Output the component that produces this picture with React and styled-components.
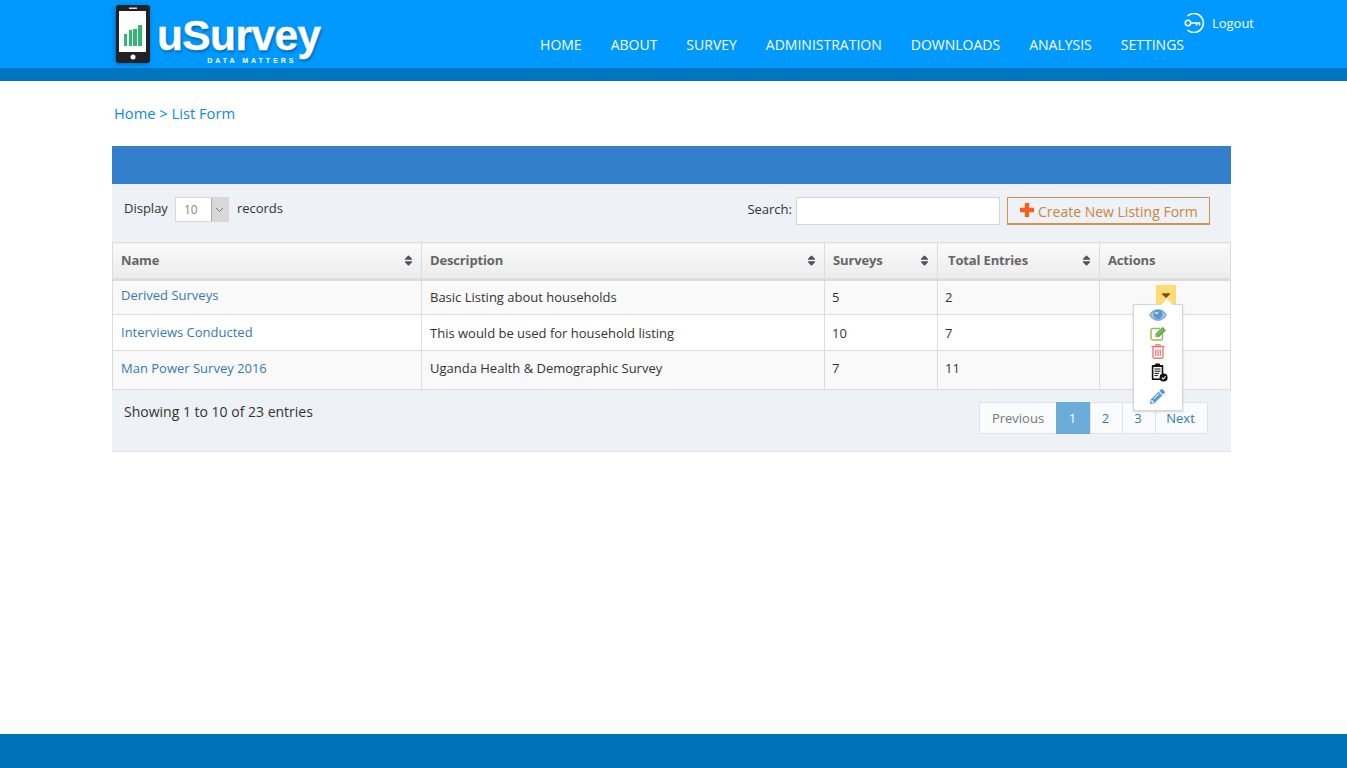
import React from "react";
import styled, { createGlobalStyle } from "styled-components";
import { FaPencilAlt, FaSort, FaCaretDown } from "react-icons/fa";

const GlobalStyle = createGlobalStyle`
    html, body { margin: 0; padding: 0; background: #fff; }
    body { font-family: "Open Sans", "Liberation Sans", sans-serif; color: #333; font-size: 13px; }
`;

const NAV_ITEMS = ["HOME", "ABOUT", "SURVEY", "ADMINISTRATION", "DOWNLOADS", "ANALYSIS", "SETTINGS"];

const COLUMNS = [
    { name: "Name", width: 309, sort: true },
    { name: "Description", width: 403, sort: true },
    { name: "Surveys", width: 113, sort: true },
    { name: "Total Entries", width: 162, sort: true, indent: true },
    { name: "Actions", width: 131 },
];

const ROWS = [
    { name: "Derived Surveys", description: "Basic Listing about households", surveys: 5, entries: 2, height: 35, striped: true, lift: 2, nameTop: -2 },
    { name: "Interviews Conducted", description: "This would be used for household listing", surveys: 10, entries: 7, height: 36, lift: 0, nameTop: -1 },
    { name: "Man Power Survey 2016", description: "Uganda Health & Demographic Survey", surveys: 7, entries: 11, height: 39, striped: true, lift: 4, nameTop: 0 },
];

const Logo = () => (
    <LogoWrap>
        <PhoneIcon width="34" height="58" viewBox="0 0 34 58">
            <rect x="0" y="0" width="34" height="58" rx="3" fill="#222226" />
            <rect x="3" y="6" width="27" height="41" fill="#fff" />
            <rect x="13" y="2.5" width="8" height="1.5" fill="#ddd" />
            <circle cx="17" cy="52" r="2.5" fill="#fff" />
            <rect x="8" y="29" width="3" height="12" fill="#2eb872" />
            <rect x="13" y="25" width="3" height="16" fill="#2eb872" />
            <rect x="17" y="24" width="4" height="17" fill="#2eb872" />
            <rect x="22" y="20" width="4" height="21" fill="#2eb872" />
        </PhoneIcon>
        <LogoText>
            uSurvey
            <LogoTag>DATA MATTERS</LogoTag>
        </LogoText>
    </LogoWrap>
);

const KeyIcon = () => (
    <svg width="21" height="20" viewBox="0 0 21 20" fill="none" stroke="#fff" strokeWidth="1.6">
        <path d="M3.5 3 A9.5 9.5 0 1 1 3.5 17" />
        <circle cx="4" cy="10" r="2.7" />
        <path d="M6.7 10 H15.5 V12.5 M12.5 10 V12.5" />
    </svg>
);

const PlusIcon = () => (
    <svg width="14" height="14" viewBox="0 0 14 14">
        <path d="M4.8 0 H9.2 V4.8 H14 V9.2 H9.2 V14 H4.8 V9.2 H0 V4.8 H4.8 Z" fill="#f4611d" />
    </svg>
);

const EyeIcon = () => (
    <svg width="18" height="12" viewBox="0 0 18 12">
        <path d="M0.8 6 C3 2.4 6 0.8 9 0.8 C12 0.8 15 2.4 17.2 6 C15 9.6 12 11.2 9 11.2 C6 11.2 3 9.6 0.8 6 Z" fill="#a9c6e6" stroke="#6ea5d8" strokeWidth="1.2" />
        <circle cx="9" cy="5.6" r="4.6" fill="#5b97d2" />
        <ellipse cx="7.6" cy="4" rx="1.8" ry="1.1" fill="#dbe8f5" />
    </svg>
);

const EditIcon = () => (
    <svg width="18" height="15" viewBox="0 0 18 15">
        <path d="M12.5 6.5 V12 A2 2 0 0 1 10.5 14 H3 A2 2 0 0 1 1 12 V4.5 A2 2 0 0 1 3 2.5 H10" fill="none" stroke="#8fbf5f" strokeWidth="1.4" />
        <path d="M1 5 V12 A2 2 0 0 0 3 14 H6" fill="none" stroke="#e9b65c" strokeWidth="0.9" />
        <path d="M5 10.8 L5.8 7.6 L12.6 0.8 L16 4.2 L9.2 11 Z" fill="#6cae45" />
        <path d="M6 10 L13 3" stroke="#a6d184" strokeWidth="0.8" />
    </svg>
);

const TrashIcon = () => (
    <svg width="14" height="15" viewBox="0 0 14 15" fill="none">
        <path d="M5 2 V0.8 H9 V2" stroke="#e8705f" strokeWidth="1.1" />
        <path d="M0.5 2.6 H13.5" stroke="#e8705f" strokeWidth="1.6" />
        <path d="M2 3.4 V12.8 A1.5 1.5 0 0 0 3.5 14.3 H10.5 A1.5 1.5 0 0 0 12 12.8 V3.4" stroke="#ec8063" strokeWidth="1.4" />
        <path d="M4.8 5.5 V12 M7 5.5 V12 M9.2 5.5 V12" stroke="#d9608f" strokeWidth="1.1" />
    </svg>
);

const ClipboardIcon = () => (
    <svg width="17" height="19" viewBox="0 0 17 19">
        <rect x="0.8" y="2" width="11.5" height="15" rx="1" fill="#111" />
        <rect x="2.4" y="4" width="8.3" height="11.4" fill="#fff" />
        <rect x="4" y="0.6" width="5" height="3.4" rx="0.6" fill="#111" />
        <path d="M3.5 6 H9.5 M3.5 8.2 H9.5 M3.5 10.4 H8 M3.5 12.6 H7" stroke="#111" strokeWidth="1" />
        <circle cx="12.6" cy="14.6" r="4" fill="#111" />
        <path d="M10.8 14.6 L12.2 16 L14.6 13.3" stroke="#fff" strokeWidth="1.1" fill="none" />
    </svg>
);

const App = () => (
    <Page>
        <GlobalStyle />
        <Header>
            <HeaderInner>
                <Logo />
                <HeaderRight>
                    <Logout>
                        <KeyIcon />
                        Logout
                    </Logout>
                    <Nav>
                        {NAV_ITEMS.map((item) => (
                            <NavLink key={item}>{item}</NavLink>
                        ))}
                    </Nav>
                </HeaderRight>
            </HeaderInner>
        </Header>
        <HeaderStrip />

        <Main>
            <Breadcrumb>Home &gt; List Form</Breadcrumb>
            <TitleBar />
            <Toolbar>
                <DisplayBox>
                    <DisplayLabel>Display</DisplayLabel>
                    <FakeSelect>
                        <SelectValue>10</SelectValue>
                        <SelectArrow>
                            <svg width="9" height="6" viewBox="0 0 9 6" fill="none" stroke="#777" strokeWidth="1">
                                <path d="M1 1 L4.5 4.5 L8 1" />
                            </svg>
                        </SelectArrow>
                    </FakeSelect>
                    <DisplayLabel>records</DisplayLabel>
                </DisplayBox>
                <SearchBox>
                    <SearchLabel>Search:</SearchLabel>
                    <SearchInput />
                    <CreateButton>
                        <PlusIcon />
                        Create New Listing Form
                    </CreateButton>
                </SearchBox>
            </Toolbar>

            <TableWrap>
                <Table>
                    <colgroup>
                        {COLUMNS.map((col) => (
                            <col key={col.name} style={{ width: col.width }} />
                        ))}
                    </colgroup>
                    <thead>
                        <tr>
                            {COLUMNS.map((col) => (
                                <HeadCell key={col.name} $indent={col.indent}>
                                    {col.name}
                                    {col.sort && (
                                        <SortIcon>
                                            <FaSort size={13} />
                                        </SortIcon>
                                    )}
                                </HeadCell>
                            ))}
                        </tr>
                    </thead>
                    <tbody>
                        {ROWS.map((row) => (
                            <Row key={row.name} $height={row.height} $striped={row.striped}>
                                <Cell $lift={row.lift}><NameLink $top={row.nameTop}>{row.name}</NameLink></Cell>
                                <Cell $lift={row.lift}>{row.description}</Cell>
                                <Cell $lift={row.lift} $tight>{row.surveys}</Cell>
                                <Cell $lift={row.lift} $tight>{row.entries}</Cell>
                                <Cell />
                            </Row>
                        ))}
                    </tbody>
                </Table>

                <ActionToggle>
                    <FaCaretDown size={14} color="#7a4a1c" />
                </ActionToggle>
                <ActionMenu>
                    <ActionItem $height={18}><EyeIcon /></ActionItem>
                    <ActionItem $height={18} $nudge={1}><EditIcon /></ActionItem>
                    <ActionItem $height={18}><TrashIcon /></ActionItem>
                    <ActionItem $height={24} $nudge={3}><ClipboardIcon /></ActionItem>
                    <ActionItem $height={24} $nudge={-1}><FaPencilAlt size={15} color="#5b9bd5" /></ActionItem>
                </ActionMenu>
            </TableWrap>

            <TableFooter>
                <Showing>Showing 1 to 10 of 23 entries</Showing>
                <Pagination>
                    <PageButton $muted $width={78}>Previous</PageButton>
                    <PageButton $active $width={35}>1</PageButton>
                    <PageButton $width={33}>2</PageButton>
                    <PageButton $width={34}>3</PageButton>
                    <PageButton $width={53}>Next</PageButton>
                </Pagination>
            </TableFooter>
        </Main>

        <Footer />
    </Page>
);

const Page = styled.div`
    min-height: 768px;
    display: flex;
    flex-direction: column;
`;

const Header = styled.header`
    height: 68px;
    background: #0099ff;
`;

const HeaderInner = styled.div`
    width: 1144px;
    margin-left: 110px;
    height: 100%;
    display: flex;
    justify-content: space-between;
`;

const LogoWrap = styled.div`
    display: flex;
    align-items: flex-start;
    padding: 5px 0 0 6px;
    gap: 7px;
`;

const PhoneIcon = styled.svg`
    flex-shrink: 0;
    filter: drop-shadow(-1px 1px 2px rgba(0, 50, 110, 0.5));
`;

const LogoText = styled.div`
    position: relative;
    margin-top: 7px;
    font-family: "Liberation Sans", Arial, sans-serif;
    font-weight: 700;
    font-size: 42.5px;
    line-height: 47px;
    letter-spacing: -0.6px;
    color: #fff;
    -webkit-text-stroke: 0.4px #fff;
    text-shadow: 1px 2px 3px rgba(0, 50, 110, 0.55);
`;

const LogoTag = styled.div`
    position: absolute;
    right: 24px;
    top: 45px;
    font-size: 7px;
    line-height: 8px;
    letter-spacing: 3px;
    white-space: nowrap;
    text-shadow: none;
    -webkit-text-stroke: 0;
`;

const HeaderRight = styled.div`
    display: flex;
    flex-direction: column;
    align-items: flex-end;
`;

const Logout = styled.div`
    display: flex;
    align-items: center;
    gap: 7px;
    padding-top: 12px;
    height: 21px;
    color: #fff;
    font-size: 13px;
`;

const Nav = styled.nav`
    display: flex;
    gap: 29px;
    margin-top: 2px;
    margin-right: 70px;
`;

const NavLink = styled.a`
    color: #fff;
    font-size: 14px;
    line-height: 20px;
`;

const HeaderStrip = styled.div`
    height: 13px;
    background: #0076c0;
`;

const Main = styled.main`
    flex: 1;
    width: 1119px;
    margin-left: 112px;
`;

const Breadcrumb = styled.div`
    padding: 22px 0 0 2px;
    height: 43px;
    color: #0a8ae6;
    font-size: 14.7px;
    line-height: 20px;
`;

const TitleBar = styled.div`
    height: 38px;
    background: #337fcc;
`;

const Toolbar = styled.div`
    height: 58px;
    box-sizing: border-box;
    padding: 13px 21px 0 12px;
    background: #eef1f6;
    display: flex;
    justify-content: space-between;
    align-items: flex-start;
`;

const DisplayBox = styled.div`
    display: flex;
    align-items: center;
    gap: 7px;
    height: 25px;
`;

const DisplayLabel = styled.span`
    margin-bottom: 4px;
    font-size: 13px;
    color: #333;
`;

const FakeSelect = styled.div`
    display: flex;
    width: 54px;
    height: 25px;
    margin-right: 1px;
    box-sizing: border-box;
    border: 1px solid #d5d8dc;
    background: #fff;
`;

const SelectValue = styled.div`
    flex: 1;
    padding-left: 8px;
    line-height: 24px;
    font-size: 12px;
    color: #8a8a6a;
`;

const SelectArrow = styled.div`
    width: 16px;
    background: #d8d8d8;
    border-left: 1px solid #aaa;
    display: flex;
    align-items: center;
    justify-content: center;
`;

const SearchBox = styled.div`
    display: flex;
    align-items: flex-start;
`;

const SearchLabel = styled.span`
    line-height: 25px;
    margin-right: 4px;
    font-size: 13px;
    color: #333;
`;

const SearchInput = styled.div`
    width: 204px;
    height: 28px;
    box-sizing: border-box;
    border: 1px solid #d3d6da;
    background: #fff;
    margin-right: 7px;
`;

const CreateButton = styled.button`
    width: 203px;
    height: 28px;
    padding: 2px 0 0 12px;
    box-sizing: border-box;
    display: flex;
    align-items: center;
    gap: 4px;
    background: #eef1f6;
    border: 1px solid #d09350;
    border-bottom-width: 2px;
    color: #c9853f;
    font-family: inherit;
    font-size: 14px;
    white-space: nowrap;

    svg {
        margin-top: -3px;
    }
`;

const TableWrap = styled.div`
    position: relative;
`;

const Table = styled.table`
    width: 1118px;
    table-layout: fixed;
    border-collapse: collapse;
`;

const HeadCell = styled.th`
    position: relative;
    height: 37px;
    box-sizing: border-box;
    padding: 0 0 2px ${(p) => (p.$indent ? 10 : 8)}px;
    text-align: left;
    font-size: 13px;
    font-weight: 700;
    letter-spacing: -0.15px;
    color: #666;
    background: linear-gradient(#fafafa, #ececec);
    border: 1px solid #dcdcdc;
    border-bottom: 3px solid #dcdcdc;
`;

const SortIcon = styled.span`
    position: absolute;
    right: 6px;
    top: 11px;
    color: #4a5360;
    line-height: 0;
`;

const Row = styled.tr`
    height: ${(p) => p.$height}px;
    background: ${(p) => (p.$striped ? "#f9f9f9" : "#fff")};
`;

const Cell = styled.td`
    box-sizing: border-box;
    padding: 0 0 ${(p) => p.$lift || 0}px ${(p) => (p.$tight ? 7 : 8)}px;
    font-size: 13px;
    color: #333;
    border: 1px solid #dcdcdc;
`;

const NameLink = styled.a`
    position: relative;
    top: ${(p) => p.$top}px;
    color: #337ab7;
`;

const ActionToggle = styled.div`
    position: absolute;
    left: 1044px;
    top: 43px;
    width: 20px;
    height: 20px;
    background: #ffdb76;
    display: flex;
    align-items: center;
    justify-content: center;
`;

const ActionMenu = styled.div`
    position: absolute;
    left: 1021px;
    top: 62px;
    width: 50px;
    height: 107px;
    box-sizing: border-box;
    padding-top: 1px;
    background: #fff;
    border: 1px solid #d5d5d5;
    box-shadow: 0 1px 2px rgba(0, 0, 0, 0.15);
    display: flex;
    flex-direction: column;
    align-items: center;

    &::before {
        content: "";
        position: absolute;
        left: 27px;
        top: -6px;
        border-left: 6px solid transparent;
        border-right: 6px solid transparent;
        border-bottom: 6px solid #fff;
    }
`;

const ActionItem = styled.div`
    height: ${(p) => p.$height}px;
    margin-left: ${(p) => p.$nudge || 0}px;
    display: flex;
    align-items: center;
    justify-content: center;
`;

const TableFooter = styled.div`
    height: 62px;
    box-sizing: border-box;
    padding: 12px 23px 0 12px;
    background: #eef1f6;
    border-bottom: 1px solid #dfe2e6;
    display: flex;
    justify-content: space-between;
    align-items: flex-start;
`;

const Showing = styled.div`
    font-size: 14px;
    line-height: 19px;
    color: #333;
`;

const Pagination = styled.div`
    display: flex;
    height: 32px;
`;

const PageButton = styled.div`
    width: ${(p) => p.$width}px;
    box-sizing: border-box;
    margin-left: -1px;
    padding-right: ${(p) => (p.$muted ? 0 : 2)}px;
    display: flex;
    align-items: center;
    justify-content: center;
    font-size: 13px;
    color: ${(p) => (p.$active ? "#fff" : p.$muted ? "#777" : "#337ab7")};
    background: ${(p) => (p.$active ? "#6cacd9" : "#fafbfc")};
    border: 1px solid ${(p) => (p.$active ? "#6cacd9" : "#dde3e6")};
`;

const Footer = styled.footer`
    height: 34px;
    background: #0072bc;
`;

export default App;
